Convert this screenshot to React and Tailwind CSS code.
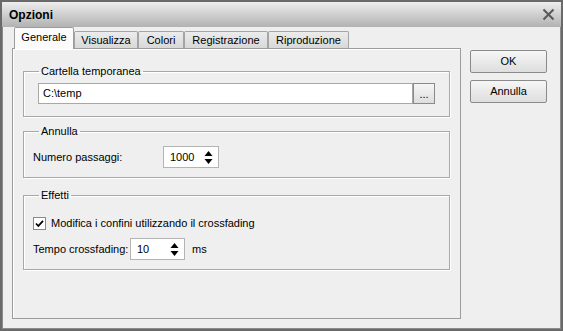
import React from "react";

const tabs = [
  { label: "Generale", w: "w-[60px]", active: true },
  { label: "Visualizza", w: "w-[64px]" },
  { label: "Colori", w: "w-[46px]" },
  { label: "Registrazione", w: "w-[84px]" },
  { label: "Riproduzione", w: "w-[81px]" },
];

const Spinner = ({ value, w }) => (
  <div className={`flex h-[22px] ${w} items-center justify-between border border-[#b4b4b4] bg-white pl-[6px] pr-[5px]`}>
    <span>{value}</span>
    <svg width="9" height="15" viewBox="0 0 9 15">
      <path d="M4.5 1 L8.5 6 L0.5 6 Z" fill="#000" />
      <path d="M0.5 9 L8.5 9 L4.5 14 Z" fill="#000" />
    </svg>
  </div>
);

const Group = ({ title, className, children }) => (
  <fieldset className={`mx-[10px] border border-[#a8a8a8] shadow-[inset_1px_1px_0_#fff,1px_1px_0_#fff] px-[9px] ${className}`}>
    <legend className="ml-[6px] px-[2px] leading-[13px]">{title}</legend>
    {children}
  </fieldset>
);

const Button = ({ children }) => (
  <div className="flex h-[23px] w-[77px] items-center justify-center rounded-[2px] border border-[#8a8a8a] bg-gradient-to-b from-[#f6f6f6] to-[#dedede]">
    {children}
  </div>
);

export default function App() {
  return (
    <div className="flex h-[331px] w-[563px] flex-col border-2 border-[#6a6a6a] bg-[#efefef] font-['Liberation_Sans',sans-serif] text-[11px] text-black">
      <div className="flex h-[25px] shrink-0 items-center justify-between bg-gradient-to-b from-[#eeeeee] to-[#b2b2b2] pl-[7px] pr-[6px]">
        <span className="text-[12px] font-bold">Opzioni</span>
        <svg width="13" height="13" viewBox="0 0 13 13">
          <path d="M1.5 1.5 L11.5 11.5 M11.5 1.5 L1.5 11.5" stroke="#5a5a5a" strokeWidth="2.1" />
        </svg>
      </div>

      <div className="flex flex-1 border-x border-b border-[#8c8c8c] pl-[9px] pt-[1px]">
        <div className="flex w-[449px] flex-col">
          <div className="flex h-[20px] items-end pl-[2px]">
            {tabs.map((t) =>
              t.active ? (
                <div
                  key={t.label}
                  className={`relative z-10 -mb-px flex h-[22px] ${t.w} items-center justify-center rounded-t-[2px] border border-b-0 border-[#9c9c9c] bg-[#fbfbfb] pb-[2px]`}
                >
                  {t.label}
                </div>
              ) : (
                <div
                  key={t.label}
                  className={`flex h-[17px] ${t.w} items-center justify-center rounded-t-[2px] border border-b-0 border-[#a4a4a4] bg-gradient-to-b from-[#ececec] to-[#d8d8d8]`}
                >
                  {t.label}
                </div>
              )
            )}
          </div>

          <div className="h-[271px] border border-[#9c9c9c] bg-[#efefef] pt-[16px] shadow-[inset_1px_1px_0_#fff]">
            <Group title="Cartella temporanea" className="pb-[12px] pt-[5px]">
              <div className="flex h-[21px] pl-[5px] pr-[5px]">
                <div className="flex flex-1 items-center border border-[#a8a8a8] bg-white pl-[4px]">C:\temp</div>
                <div className="flex w-[22px] items-end justify-center border border-[#8a8a8a] bg-gradient-to-b from-[#f6f6f6] to-[#dedede] pb-[3px] leading-none">
                  ...
                </div>
              </div>
            </Group>

            <Group title="Annulla" className="mt-[8px] pb-[9px] pt-[8px]">
              <div className="flex items-center">
                <span className="w-[130px]">Numero passaggi:</span>
                <Spinner value="1000" w="w-[56px]" />
              </div>
            </Group>

            <Group title="Effetti" className="mt-[11px] pb-[9px] pt-[15px]">
              <div className="flex h-[13px] items-center gap-[5px]">
                <svg width="13" height="13" viewBox="0 0 13 13">
                  <rect x="0.5" y="0.5" width="12" height="12" fill="#fff" stroke="#8a8a8a" />
                  <path d="M3 6.5 L5.3 9 L10 3.8" fill="none" stroke="#000" strokeWidth="1.8" />
                </svg>
                <span>Modifica i confini utilizzando il crossfading</span>
              </div>
              <div className="mt-[8px] flex items-center">
                <span className="w-[97px]">Tempo crossfading:</span>
                <Spinner value="10" w="w-[55px]" />
                <span className="ml-[7px]">ms</span>
              </div>
            </Group>
          </div>
        </div>

        <div className="ml-[9px] flex flex-col gap-[7px] pt-[22px]">
          <Button>OK</Button>
          <Button>Annulla</Button>
        </div>
      </div>
    </div>
  );
}
